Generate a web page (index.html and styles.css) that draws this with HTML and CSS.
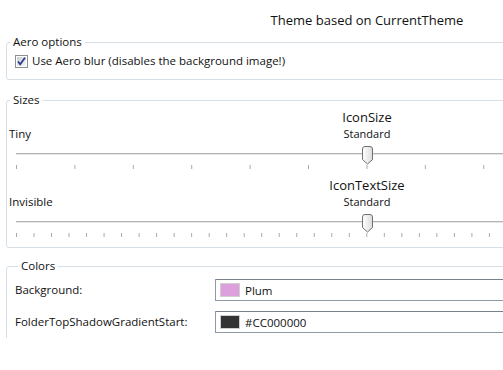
FILE: index.html
```html
<!DOCTYPE html>
<html lang="en">
<head>
    <meta charset="UTF-8">
    <title>Theme options</title>
    <link rel="stylesheet" href="styles.css">
</head>
<body>
    <div class="page">
        <div class="title">Theme based on CurrentTheme</div>

        <fieldset class="group aero">
            <legend>Aero options</legend>
            <label class="check">
                <svg class="checkbox" width="13" height="13" viewBox="0 0 13 13">
                    <defs>
                        <linearGradient id="cbg" x1="0" y1="0" x2="1" y2="1">
                            <stop offset="0" stop-color="#cbcfd5"/>
                            <stop offset="1" stop-color="#f4f5f7"/>
                        </linearGradient>
                    </defs>
                    <rect x="0.5" y="0.5" width="12" height="12" fill="#fff" stroke="#8e8f8f"/>
                    <rect x="2" y="2" width="9" height="9" fill="url(#cbg)"/>
                    <path d="M3 6.5 L5.2 9.2 L10 2.8" fill="none" stroke="#2a3f8c" stroke-width="1.8"/>
                </svg>
                <span>Use Aero blur (disables the background image!)</span>
            </label>
        </fieldset>

        <fieldset class="group sizes">
            <legend>Sizes</legend>
            <div class="slider">
                <div class="slider-head">
                    <span class="slider-min">Tiny</span>
                    <div class="slider-caption">
                        <div class="slider-name">IconSize</div>
                        <div class="slider-value">Standard</div>
                    </div>
                </div>
                <div class="track-area">
                    <div class="track"></div>
                    <div class="ticks ticks-12"></div>
                    <svg class="thumb" style="left: 50%" width="13" height="19" viewBox="0 0 13 19">
                        <defs>
                            <linearGradient id="thg" x1="0" y1="0" x2="1" y2="0">
                                <stop offset="0" stop-color="#ffffff"/>
                                <stop offset="1" stop-color="#dcdcdc"/>
                            </linearGradient>
                        </defs>
                        <path d="M1.5 3 Q1.5 0.5 4 0.5 H9 Q11.5 0.5 11.5 3 V13.5 L6.5 18 L1.5 13.5 Z" fill="url(#thg)" stroke="#707070"/>
                    </svg>
                </div>
            </div>
            <div class="slider">
                <div class="slider-head">
                    <span class="slider-min">Invisible</span>
                    <div class="slider-caption">
                        <div class="slider-name">IconTextSize</div>
                        <div class="slider-value">Standard</div>
                    </div>
                </div>
                <div class="track-area">
                    <div class="track"></div>
                    <div class="ticks ticks-40"></div>
                    <svg class="thumb" style="left: 50%" width="13" height="19" viewBox="0 0 13 19">
                        <path d="M1.5 3 Q1.5 0.5 4 0.5 H9 Q11.5 0.5 11.5 3 V13.5 L6.5 18 L1.5 13.5 Z" fill="url(#thg)" stroke="#707070"/>
                    </svg>
                </div>
            </div>
        </fieldset>

        <fieldset class="group colors">
            <legend>Colors</legend>
            <div class="color-row">
                <span class="color-label">Background:</span>
                <div class="color-box">
                    <span class="swatch" style="background: #dda0dd"></span>
                    <span>Plum</span>
                </div>
            </div>
            <div class="color-row">
                <span class="color-label">FolderTopShadowGradientStart:</span>
                <div class="color-box">
                    <span class="swatch" style="background: #333333"></span>
                    <span>#CC000000</span>
                </div>
            </div>
        </fieldset>
    </div>
</body>
</html>
```

FILE: styles.css
```css
body {
    margin: 0;
    background: #fff;
    color: #111;
    font-family: "Open Sans", "Noto Sans", sans-serif;
    font-size: 11.5px;
    overflow: hidden;
}

.page {
    width: 722px;
    height: 338px;
    padding: 0 6px;
    overflow: hidden;
}

.title {
    padding-top: 11px;
    height: 34px;
    box-sizing: border-box;
    font-size: 13px;
    line-height: 18px;
    text-align: center;
}

.group {
    margin: 0 0 12px;
    padding: 0;
    border: 1px solid #d5dfe5;
    border-radius: 3px;
}

.group legend {
    margin-left: 3px;
    padding: 0 3px;
    line-height: 16px;
}

.aero {
    padding-bottom: 11px;
}

.check {
    display: flex;
    align-items: center;
    gap: 4px;
    margin: 4px 0 0 8px;
    line-height: 14px;
}

.checkbox {
    display: block;
}

/* sliders */
.sizes {
    margin-bottom: 10px;
    padding: 0 0 3px;
}

.slider {
    padding: 0 2px;
}

.slider-head {
    display: grid;
    grid-template-columns: 1fr auto 1fr;
    align-items: end;
}

.slider-min {
    line-height: 16px;
}

.slider-caption {
    grid-column: 2;
    text-align: center;
}

.slider-name {
    font-size: 13px;
    line-height: 18px;
}

.slider-value {
    font-size: 11px;
    line-height: 16px;
}

.track-area {
    position: relative;
    height: 34px;
    margin: 0 7px;
}

.track {
    position: absolute;
    left: 0;
    right: 0;
    top: 11px;
    height: 1px;
    background: #b4b4b4;
    border-bottom: 1px solid #e6e6e6;
}

.ticks {
    position: absolute;
    left: 0;
    right: 0;
    top: 23px;
    height: 4px;
    background-image: linear-gradient(to right, #a8a8a8 1px, transparent 1px);
    background-repeat: repeat-x;
}

.ticks-12 {
    background-size: calc((100% - 1px) / 12) 100%;
}

.ticks-40 {
    background-size: calc((100% - 1px) / 40) 100%;
}

.thumb {
    position: absolute;
    top: 4px;
    margin-left: -6px;
}

/* colors */
.colors {
    padding: 5px 0 10px 8px;
}

.color-row {
    display: grid;
    grid-template-columns: 200px 1fr;
    align-items: center;
    margin-bottom: 10px;
}

.color-label {
    line-height: 16px;
}

.color-box {
    display: flex;
    align-items: center;
    gap: 5px;
    height: 20px;
    padding: 0 4px;
    border: 1px solid #8e9aa6;
    border-top-color: #76838f;
    border-radius: 1px;
}

.swatch {
    width: 18px;
    height: 12px;
    border: 1px solid #cfcfcf;
}
```
